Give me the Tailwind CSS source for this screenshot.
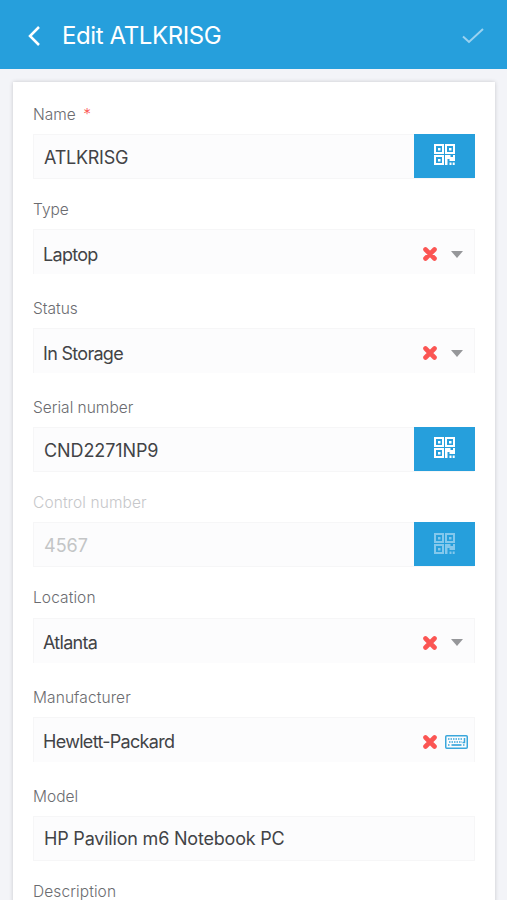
<!DOCTYPE html>
<html lang="en">
<head>
<meta charset="utf-8">
<title>Edit ATLKRISG</title>
<script src="https://cdn.jsdelivr.net/npm/@tailwindcss/browser@4"></script>
</head>
<body class="h-[900px] overflow-hidden bg-[#f3f4f8] font-['Inter','Liberation_Sans',sans-serif] text-[#424346]">
<svg class="hidden">
  <symbol id="qr" viewBox="0 0 21 21"><path fill="currentColor" fill-rule="evenodd" d="M0 0h10v10H0zM2 2v6h6V2zM4 4h2.500v2.500H4zM11 0h10v10H11zM13 2v6h6V2zM15 4h2.500v2.500H15zM0 11h10v10H0zM2 13v6h6v-6zM4 15h2.500v2.500H4zM11 11h5.500v2H19v-2h2v6h-5.500v-2H13.500v6H11zM15.500 18.500h2v2.500h-2zM18.700 18.500h2v2.500h-2z"/></symbol>
  <symbol id="x" viewBox="0 0 14 14"><path d="M2.500 2.500l9 9M11.500 2.500l-9 9" stroke="#fb5553" stroke-width="4.600" stroke-linecap="round"/></symbol>
</svg>
<header class="flex h-[69px] items-center bg-[#269fdc] pt-[3px] text-white">
  <svg class="ml-[27px] h-5 w-[14px]" viewBox="0 0 14 20" fill="none" stroke="currentColor" stroke-width="2.500"><path d="M12 1L3 10l9 9"/></svg>
  <h1 class="ml-[21px] flex-1 whitespace-nowrap text-[24px] tracking-[-0.4px]">Edit ATLKRISG</h1>
  <svg class="mr-[23px] h-4 w-[22px] text-[#9bd2f0]" viewBox="0 0 22 16" fill="none" stroke="currentColor" stroke-width="2"><path d="M1 8.500l6 5.500L21 1"/></svg>
</header>
<main class="mt-[13px] mr-[12px] ml-[13px] h-[840px] bg-white px-5 pt-[23px] shadow-[0_0_4px_rgba(0,0,0,0.18)]">
  <section class="mb-[21px]">
    <label class="mb-[9px] block h-5 text-[15.5px] font-light leading-5 text-[#6b6c70]">Name <span class="ml-[3px] text-[#fb5553]">*</span></label>
    <div class="mr-px flex h-[45px] border border-[#f6f6f7] bg-[#fcfcfd]"><span class="flex-1 self-center pt-[2px] pl-[10px] text-[18px] tracking-[-0.25px]">ATLKRISG</span><button class="-mt-px -mr-[2px] flex h-11 w-[61px] justify-center bg-[#269fdc] pt-[10px] text-white"><svg class="size-[21px]"><use href="#qr"/></svg></button></div>
  </section>
  <section class="mb-[25px]">
    <label class="mb-[9px] block h-5 text-[15.5px] font-light leading-5 text-[#6b6c70]">Type</label>
    <div class="flex h-[45px] items-center border border-b-0 border-[#f6f6f7] bg-[#fcfcfd] pt-1 pl-[9px]"><span class="flex-1 text-[18px] tracking-[-0.7px]">Laptop</span><svg class="mr-[14px] size-[14px]"><use href="#x"/></svg><svg class="mr-[11px] h-[7px] w-[12px]" viewBox="0 0 12 7"><path d="M0 0h12L6 7z" fill="#96979a"/></svg></div>
  </section>
  <section class="mb-[25px]">
    <label class="mb-[9px] block h-5 text-[15.5px] font-light leading-5 text-[#6b6c70]">Status</label>
    <div class="flex h-[45px] items-center border border-b-0 border-[#f6f6f7] bg-[#fcfcfd] pt-1 pl-[9px]"><span class="flex-1 text-[18px] tracking-[-0.7px]">In Storage</span><svg class="mr-[14px] size-[14px]"><use href="#x"/></svg><svg class="mr-[11px] h-[7px] w-[12px]" viewBox="0 0 12 7"><path d="M0 0h12L6 7z" fill="#96979a"/></svg></div>
  </section>
  <section class="mb-[21px]">
    <label class="mb-[9px] block h-5 text-[15.5px] font-light leading-5 text-[#6b6c70]">Serial number</label>
    <div class="mr-px flex h-[45px] border border-[#f6f6f7] bg-[#fcfcfd]"><span class="flex-1 self-center pt-[2px] pl-[10px] text-[18px] tracking-[-0.1px]">CND2271NP9</span><button class="-mt-px -mr-[2px] flex h-11 w-[61px] justify-center bg-[#269fdc] pt-[10px] text-white"><svg class="size-[21px]"><use href="#qr"/></svg></button></div>
  </section>
  <section class="mb-[21px]">
    <label class="mb-[9px] block h-5 text-[15.5px] font-light leading-5 tracking-[0.1px] text-[#c6c7ca]">Control number</label>
    <div class="mr-px flex h-[45px] border border-[#f6f6f7] bg-[#fcfcfd]"><span class="flex-1 self-center pt-[2px] pl-[10px] text-[18px] text-[#c3c5c6]">4567</span><button class="-mt-px -mr-[2px] flex h-11 w-[61px] justify-center bg-[#269fdc] pt-[11px] text-[#84c8ec]"><svg class="size-[21px]"><use href="#qr"/></svg></button></div>
  </section>
  <section class="mb-[25px]">
    <label class="mb-2.5 block h-5 text-[15.5px] font-light leading-5 tracking-[0.1px] text-[#6b6c70]">Location</label>
    <div class="flex h-[45px] items-center border border-b-0 border-[#f6f6f7] bg-[#fcfcfd] pt-[3px] pl-[9px]"><span class="flex-1 text-[18px] tracking-[-0.7px]">Atlanta</span><svg class="mr-[14px] size-[14px]"><use href="#x"/></svg><svg class="mr-[11px] h-[7px] w-[12px]" viewBox="0 0 12 7"><path d="M0 0h12L6 7z" fill="#96979a"/></svg></div>
  </section>
  <section class="mb-[25px]">
    <label class="mb-[9px] block h-5 text-[15.5px] font-light leading-5 tracking-[0.1px] text-[#6b6c70]">Manufacturer</label>
    <div class="flex h-[45px] items-center border border-b-0 border-[#f6f6f7] bg-[#fcfcfd] pt-[3px] pl-[9px]"><span class="flex-1 text-[18px] tracking-[-0.7px]">Hewlett-Packard</span><svg class="mr-[8px] size-[14px]"><use href="#x"/></svg><svg class="mr-[6px] h-[14px] w-[23px]" viewBox="0 0 23 14" fill="none" stroke="#3ba7dc"><rect x=".75" y=".75" width="21.500" height="12.500" rx="1" stroke-width="1.500"/><path d="M3 4h14M4 7h13M3 10h2M18 10h2" stroke-dasharray="1.500 1" stroke-width="1.700"/><path d="M6.500 10h10" stroke-width="1.700"/><path d="M19.500 3v4.500H17.500" stroke-width="1.500"/></svg></div>
  </section>
  <section class="mb-[21px]">
    <label class="mb-[9px] block h-5 text-[15.5px] font-light leading-5 text-[#6b6c70]">Model</label>
    <div class="flex h-[45px] items-center border border-[#f6f6f7] bg-[#fcfcfd] pl-[10px]"><span class="text-[18px] tracking-[-0.2px]">HP Pavilion m6 Notebook PC</span></div>
  </section>
  <label class="block h-5 text-[15.5px] font-light leading-5 tracking-[0.1px] text-[#6b6c70]">Description</label>
</main>
</body>
</html>
